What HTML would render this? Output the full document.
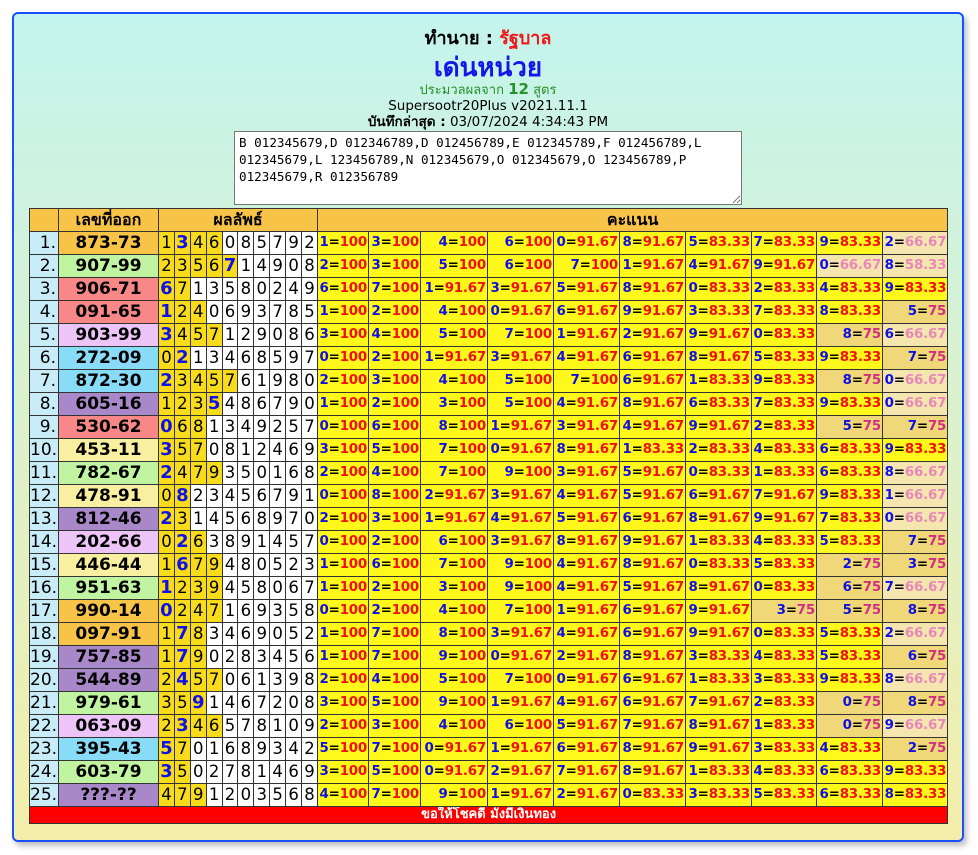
<!DOCTYPE html>
<html><head><meta charset="utf-8">
<style>
html,body{margin:0;padding:0;background:#fff;width:978px;height:855px;overflow:hidden}
.box{position:absolute;left:12px;top:12px;width:948px;height:826px;border:2px solid #1a4fff;border-radius:6px;background:linear-gradient(#c4f4ee,#f4eeaa);box-shadow:3px 4px 6px rgba(0,0,0,.25);font-family:"DejaVu Sans","Noto Sans CJK SC",sans-serif}
.hd{position:absolute;left:0;width:948px;text-align:center;white-space:nowrap;line-height:1}
textarea{position:absolute;left:220px;top:117px;width:498px;height:68px;padding:2px 4px;border:1px solid #777;font-family:"DejaVu Sans Mono",monospace;font-size:12.6px;line-height:17px;resize:both;margin:0;background:#fff;overflow:hidden}
table{position:absolute;left:15px;top:194px;border-collapse:collapse;table-layout:fixed;width:919px}
td{border:1px solid #333;padding:0;height:22px;line-height:20px;overflow:hidden;white-space:nowrap}
.th td{background:#f8c448;font-weight:bold;font-size:16px;text-align:center;height:22px;font-family:"DejaVu Sans","Noto Sans CJK SC",sans-serif}
.ix{background:#c8ecf8;text-align:right;font-size:17px;padding-right:2px}
.nm{text-align:center;font-weight:bold;font-size:17px}
.d{text-align:center;font-size:16.5px;background:#fff}
.d.y{background:#f8dc1c}
.d b{color:#1010e8;font-size:18px}
.s{text-align:right;font-weight:bold;font-size:13.4px;background:#fff81a;padding-right:1px;letter-spacing:-0.2px}
.s i{font-style:normal;color:#1010e0}
.s u{text-decoration:none;color:#f01010}
.s.p{background:#f0d878}.s.p u{color:#d0307f}
.s.q{background:#f5e6b0}.s.q u{color:#e888b8}
.ft td{background:#ff0000;color:#fff;font-weight:bold;font-size:13px;text-align:center;height:16px;line-height:16px}
</style></head><body>
<div class="box">
<div class="hd" style="top:16px;font-size:18px;font-weight:bold">ทำนาย : <span style="color:#f01818">รัฐบาล</span></div>
<div class="hd" style="top:41px;font-size:26px;font-weight:bold;color:#1515e8">เด่นหน่วย</div>
<div class="hd" style="top:68px;font-size:13px;color:#289028">ประมวลผลจาก <b style="font-size:15px">12</b> สูตร</div>
<div class="hd" style="top:86px;font-size:13.5px">Supersootr20Plus v2021.11.1</div>
<div class="hd" style="top:102px;font-size:13.5px"><b>บันทึกล่าสุด :</b> 03/07/2024 4:34:43 PM</div>
<textarea>B 012345679,D 012346789,D 012456789,E 012345789,F 012456789,L 012345679,L 123456789,N 012345679,O 012345679,O 123456789,P 012345679,R 012356789</textarea>
<table id="t">
<colgroup><col style="width:29px"><col style="width:100px"><col span="10" style="width:15.9px"><col style="width:51px"><col style="width:52px"><col style="width:67px"><col style="width:66px"><col style="width:66px"><col style="width:66px"><col style="width:66px"><col style="width:65px"><col style="width:66px"><col style="width:65px"></colgroup>
<tr class="th"><td></td><td>เลขที่ออก</td><td colspan="10">ผลลัพธ์</td><td colspan="10">คะแนน</td></tr>
</table>
</div>
<script>
var C={o:'#f8c448',g:'#c0f4a0',r:'#f88888',l:'#ecc4f8',c:'#88dcf8',p:'#a888c8',y:'#f8f0a0'};
var R=[
["873-73","o","1346085792",4,1,"1=100 3=100 4=100 6=100 0=91.67 8=91.67 5=83.33 7=83.33 9=83.33 2=66.67"],
["907-99","g","2356714908",5,4,"2=100 3=100 5=100 6=100 7=100 1=91.67 4=91.67 9=91.67 0=66.67 8=58.33"],
["906-71","r","6713580249",2,0,"6=100 7=100 1=91.67 3=91.67 5=91.67 8=91.67 0=83.33 2=83.33 4=83.33 9=83.33"],
["091-65","r","1240693785",3,0,"1=100 2=100 4=100 0=91.67 6=91.67 9=91.67 3=83.33 7=83.33 8=83.33 5=75"],
["903-99","l","3457129086",4,0,"3=100 4=100 5=100 7=100 1=91.67 2=91.67 9=91.67 0=83.33 8=75 6=66.67"],
["272-09","c","0213468597",2,1,"0=100 2=100 1=91.67 3=91.67 4=91.67 6=91.67 8=91.67 5=83.33 9=83.33 7=75"],
["872-30","c","2345761980",5,0,"2=100 3=100 4=100 5=100 7=100 6=91.67 1=83.33 9=83.33 8=75 0=66.67"],
["605-16","p","1235486790",4,3,"1=100 2=100 3=100 5=100 4=91.67 8=91.67 6=83.33 7=83.33 9=83.33 0=66.67"],
["530-62","r","0681349257",3,0,"0=100 6=100 8=100 1=91.67 3=91.67 4=91.67 9=91.67 2=83.33 5=75 7=75"],
["453-11","y","3570812469",3,0,"3=100 5=100 7=100 0=91.67 8=91.67 1=83.33 2=83.33 4=83.33 6=83.33 9=83.33"],
["782-67","g","2479350168",4,0,"2=100 4=100 7=100 9=100 3=91.67 5=91.67 0=83.33 1=83.33 6=83.33 8=66.67"],
["478-91","y","0823456791",2,1,"0=100 8=100 2=91.67 3=91.67 4=91.67 5=91.67 6=91.67 7=91.67 9=83.33 1=66.67"],
["812-46","p","2314568970",2,0,"2=100 3=100 1=91.67 4=91.67 5=91.67 6=91.67 8=91.67 9=91.67 7=83.33 0=66.67"],
["202-66","l","0263891457",3,1,"0=100 2=100 6=100 3=91.67 8=91.67 9=91.67 1=83.33 4=83.33 5=83.33 7=75"],
["446-44","y","1679480523",4,1,"1=100 6=100 7=100 9=100 4=91.67 8=91.67 0=83.33 5=83.33 2=75 3=75"],
["951-63","g","1239458067",4,0,"1=100 2=100 3=100 9=100 4=91.67 5=91.67 8=91.67 0=83.33 6=75 7=66.67"],
["990-14","o","0247169358",4,0,"0=100 2=100 4=100 7=100 1=91.67 6=91.67 9=91.67 3=75 5=75 8=75"],
["097-91","o","1783469052",3,1,"1=100 7=100 8=100 3=91.67 4=91.67 6=91.67 9=91.67 0=83.33 5=83.33 2=66.67"],
["757-85","p","1790283456",3,1,"1=100 7=100 9=100 0=91.67 2=91.67 8=91.67 3=83.33 4=83.33 5=83.33 6=75"],
["544-89","p","2457061398",4,1,"2=100 4=100 5=100 7=100 0=91.67 6=91.67 1=83.33 3=83.33 9=83.33 8=66.67"],
["979-61","g","3591467208",3,2,"3=100 5=100 9=100 1=91.67 4=91.67 6=91.67 7=91.67 2=83.33 0=75 8=75"],
["063-09","l","2346578109",4,1,"2=100 3=100 4=100 6=100 5=91.67 7=91.67 8=91.67 1=83.33 0=75 9=66.67"],
["395-43","c","5701689342",2,0,"5=100 7=100 0=91.67 1=91.67 6=91.67 8=91.67 9=91.67 3=83.33 4=83.33 2=75"],
["603-79","g","3502781469",2,0,"3=100 5=100 0=91.67 2=91.67 7=91.67 8=91.67 1=83.33 4=83.33 6=83.33 9=83.33"],
["???-??","p","4791203568",3,-1,"4=100 7=100 9=100 1=91.67 2=91.67 0=83.33 3=83.33 5=83.33 6=83.33 8=83.33"]];
var h='';
R.forEach(function(r,i){
h+='<tr><td class="ix">'+(i+1)+'.</td><td class="nm" style="background:'+C[r[1]]+'">'+r[0]+'</td>';
for(var k=0;k<10;k++){var ch=r[2][k];h+='<td class="d'+(k<r[3]?' y':'')+'">'+(k==r[4]?'<b>'+ch+'</b>':ch)+'</td>';}
r[5].split(' ').forEach(function(s){var p=s.split('='),v=parseFloat(p[1]);var c=v==75?' p':(v<75?' q':'');h+='<td class="s'+c+'"><i>'+p[0]+'</i>=<u>'+p[1]+'</u></td>';});
h+='</tr>';});
h+='<tr class="ft"><td colspan="22">ขอให้โชคดี มั่งมีเงินทอง</td></tr>';
document.getElementById('t').insertAdjacentHTML('beforeend',h);
</script>
</body></html>
